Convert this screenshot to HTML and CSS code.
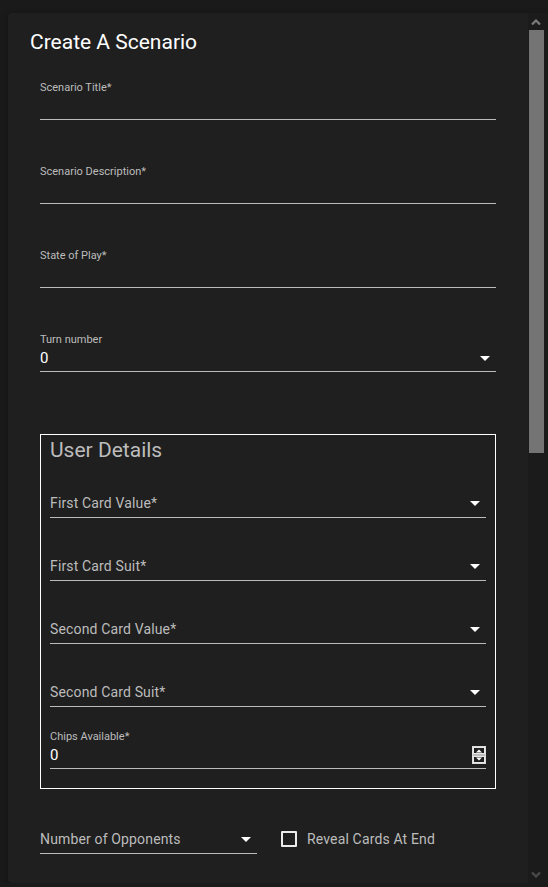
FILE: index.html
```html
<!DOCTYPE html>
<html lang="en">
<head>
<meta charset="utf-8">
<title>Create A Scenario</title>
<link rel="stylesheet" href="styles.css">
</head>
<body>
<div class="dialog">
  <div class="dialog-content">
    <h2 class="title">Create A Scenario</h2>
    <form class="form">
      <div class="field">
        <label class="field-label">Scenario Title*</label>
        <div class="field-input"></div>
      </div>
      <div class="field">
        <label class="field-label">Scenario Description*</label>
        <div class="field-input"></div>
      </div>
      <div class="field">
        <label class="field-label">State of Play*</label>
        <div class="field-input"></div>
      </div>
      <div class="field">
        <label class="field-label">Turn number</label>
        <div class="field-input">
          <span class="value">0</span>
          <svg class="caret" width="10" height="5" viewBox="0 0 10 5"><path d="M0 0h10L5 5z" fill="#fff"/></svg>
        </div>
      </div>

      <div class="group">
        <div class="group-title">User Details</div>
        <div class="select first">
          <span class="placeholder">First Card Value*</span>
          <svg class="caret" width="10" height="5" viewBox="0 0 10 5"><path d="M0 0h10L5 5z" fill="#fff"/></svg>
        </div>
        <div class="select">
          <span class="placeholder">First Card Suit*</span>
          <svg class="caret" width="10" height="5" viewBox="0 0 10 5"><path d="M0 0h10L5 5z" fill="#fff"/></svg>
        </div>
        <div class="select">
          <span class="placeholder">Second Card Value*</span>
          <svg class="caret" width="10" height="5" viewBox="0 0 10 5"><path d="M0 0h10L5 5z" fill="#fff"/></svg>
        </div>
        <div class="select">
          <span class="placeholder">Second Card Suit*</span>
          <svg class="caret" width="10" height="5" viewBox="0 0 10 5"><path d="M0 0h10L5 5z" fill="#fff"/></svg>
        </div>
        <div class="field chips">
          <label class="field-label">Chips Available*</label>
          <div class="field-input">
            <span class="value">0</span>
            <span class="spinner">
              <svg width="14" height="18" viewBox="0 0 14 18">
                <rect x="0.5" y="0.5" width="13" height="17" fill="#2a2a2a" stroke="#dcdcdc"/>
                <rect x="1.5" y="1.5" width="11" height="6" fill="#1f1f1f" stroke="#e8e8e8"/>
                <rect x="1.5" y="10.5" width="11" height="6" fill="#1f1f1f" stroke="#e8e8e8"/>
                <rect x="1" y="8" width="12" height="2" fill="#bdbdbd"/>
                <path d="M4 6.5h6L7 3.5z" fill="#fff"/>
                <path d="M4 11.5h6L7 14.5z" fill="#fff"/>
              </svg>
            </span>
          </div>
        </div>
      </div>

      <div class="bottom-row">
        <div class="select opponents">
          <span class="placeholder">Number of Opponents</span>
          <svg class="caret" width="10" height="5" viewBox="0 0 10 5"><path d="M0 0h10L5 5z" fill="#fff"/></svg>
        </div>
        <label class="check">
          <span class="box"></span>
          <span class="check-label">Reveal Cards At End</span>
        </label>
      </div>
    </form>
  </div>
  <div class="scrollbar" aria-hidden="true">
    <div class="sb-button">
      <svg width="10" height="6" viewBox="0 0 10 6"><path d="M1 5.5L5 1.5L9 5.5" fill="none" stroke="#7c7c7c" stroke-width="2.2"/></svg>
    </div>
    <div class="sb-track">
      <div class="sb-thumb"></div>
    </div>
    <div class="sb-button">
      <svg width="10" height="6" viewBox="0 0 10 6"><path d="M1 0.5L5 4.5L9 0.5" fill="none" stroke="#4a4a4a" stroke-width="2.2"/></svg>
    </div>
  </div>
</div>
</body>
</html>
```

FILE: styles.css
```css
html, body {
  margin: 0;
  padding: 0;
  background: #1a1a1a;
  font-family: Roboto, "Liberation Sans", Arial, sans-serif;
  overflow: hidden;
}

.dialog {
  margin: 13px 0 0 8px;
  width: 540px;
  height: 870px;
  background: #1f1f1f;
  border-radius: 4px 0 0 4px;
  overflow: hidden;
  display: flex;
  box-shadow: 0 2px 6px rgba(0, 0, 0, 0.3);
}

.dialog-content {
  width: 520px;
  flex: none;
  overflow: hidden;
}

.scrollbar {
  width: 20px;
  flex: none;
  background: #1b1b1b;
  display: flex;
  flex-direction: column;
}

.sb-button {
  height: 17px;
  display: flex;
  align-items: center;
  justify-content: flex-start;
  padding-left: 3px;
}

.sb-button svg {
  display: block;
}

.sb-track {
  flex: 1;
  padding-left: 1px;
}

.sb-thumb {
  width: 15px;
  height: 423px;
  background: #747474;
}

.title {
  margin: 0;
  padding: 13px 22px 0;
  font-size: 21px;
  line-height: 32px;
  font-weight: 400;
  color: #ffffff;
}

.form {
  padding: 0 32px;
}

.field {
  display: flex;
  flex-direction: column;
  margin-top: 44px;
}

.field:first-child {
  margin-top: 22px;
}

.field-label {
  font-size: 11px;
  line-height: 14px;
  padding-top: 1px;
  color: #bcbcbc;
}

.field-input {
  height: 21px;
  padding-top: 3px;
  border-bottom: 1px solid #bcbcbc;
  display: flex;
  justify-content: space-between;
  align-items: flex-start;
}

.value {
  font-size: 15px;
  line-height: 16px;
  color: #ffffff;
}

.field-input .caret {
  margin: 6px 6px 0 0;
}

.group {
  margin-top: 62px;
  border: 1px solid #ffffff;
  padding: 1px 9px 19px;
}

.group-title {
  font-size: 21px;
  line-height: 28px;
  color: #bcbcbc;
}

.select {
  height: 25px;
  padding-bottom: 5px;
  border-bottom: 1px solid #bcbcbc;
  display: flex;
  justify-content: space-between;
  align-items: flex-end;
  margin-top: 32px;
}

.select.first {
  margin-top: 23px;
}

.placeholder {
  font-size: 14px;
  line-height: 18px;
  letter-spacing: 0.15px;
  color: #bcbcbc;
}

.select .caret {
  margin: 0 6px 6px 0;
}

.field.chips {
  margin-top: 22px;
}

.spinner {
  display: block;
  margin-top: -1px;
  height: 18px;
}

.spinner svg {
  display: block;
}

.bottom-row {
  margin-top: 34px;
  display: flex;
  align-items: center;
  gap: 24px;
}

.select.opponents {
  width: 217px;
  margin-top: 0;
}

.check {
  display: flex;
  align-items: center;
  gap: 10px;
  margin-top: 1px;
}

.box {
  width: 12px;
  height: 12px;
  border: 2px solid #ececec;
  border-radius: 1px;
}

.check-label {
  font-size: 14px;
  line-height: 18px;
  letter-spacing: 0.15px;
  color: #bcbcbc;
}
```
